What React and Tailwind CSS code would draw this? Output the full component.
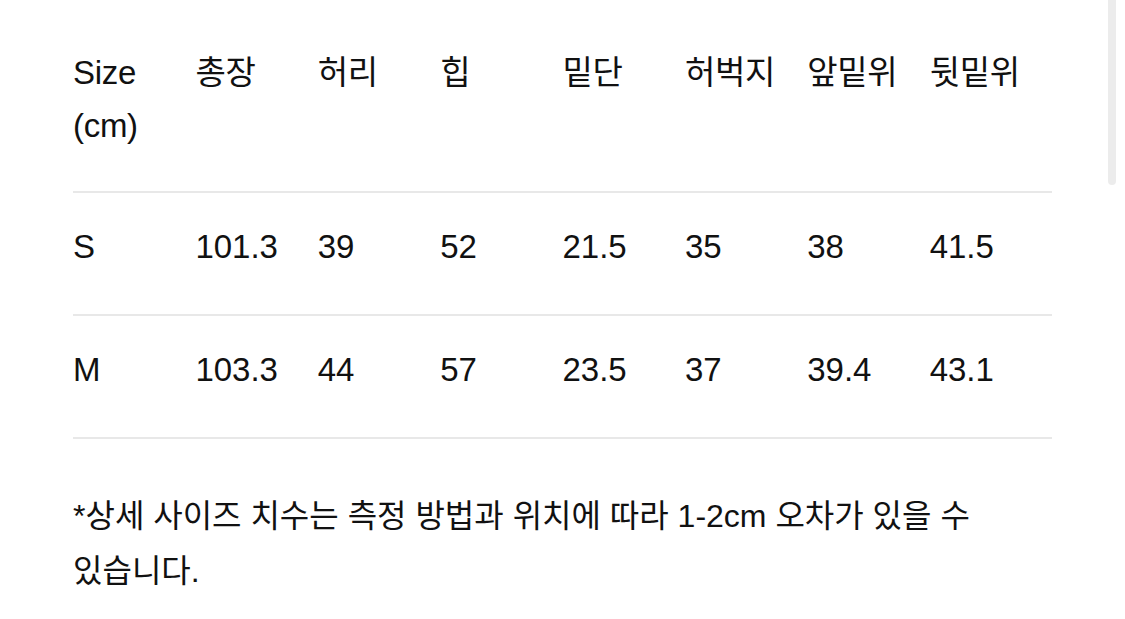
import React from 'react';

const headers = ['Size\n(cm)', '총장', '허리', '힙', '밑단', '허벅지', '앞밑위', '뒷밑위'];

const rows = [
    ['S', '101.3', '39', '52', '21.5', '35', '38', '41.5'],
    ['M', '103.3', '44', '57', '23.5', '37', '39.4', '43.1'],
];

const App = () => {
    return (
        <div
            className="relative w-[1125px] h-[619px] bg-white text-[#111] overflow-hidden"
            style={{ fontFamily: '"Liberation Sans", Arial, "Noto Sans CJK KR", sans-serif' }}
        >
            <div className="ml-[73px] w-[979px]">
                <div className="grid grid-cols-8 pt-[46px] pb-[39px] text-[33px] leading-[53px] tracking-[-0.3px]">
                    {headers.map((h, i) => (
                        <div key={i} className="whitespace-pre-line">{h}</div>
                    ))}
                </div>
                {rows.map((r) => (
                    <div key={r[0]} className="grid grid-cols-8 border-t-2 border-[#e8e8e8] h-[123px] items-center text-[33px] leading-[52px] pb-[14px]">
                        {r.map((c, i) => (
                            <div key={i}>{c}</div>
                        ))}
                    </div>
                ))}
                <div className="border-t-2 border-[#e8e8e8]" />
                <p className="mt-[50px] text-[32px] leading-[55px] w-[979px] break-keep">
                    *상세 사이즈 치수는 측정 방법과 위치에 따라 1-2cm 오차가 있을 수 있습니다.
                </p>
            </div>
            <div className="absolute right-[9px] top-0 w-[8px] h-[185px] rounded-b bg-[#ececec]" />
        </div>
    );
};

export default App;
